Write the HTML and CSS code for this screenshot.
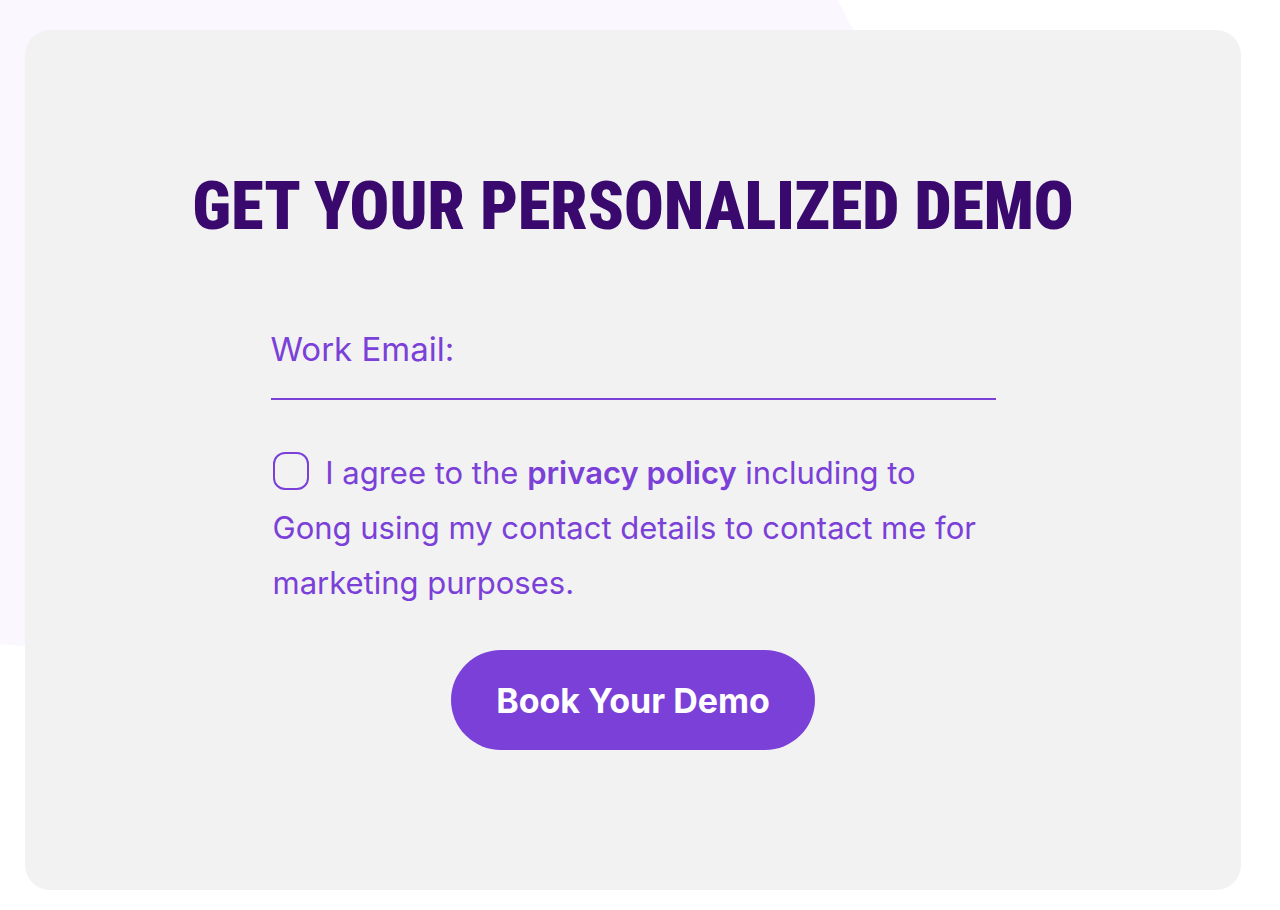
FILE: index.html
```html
<!DOCTYPE html>
<html lang="en">
<head>
<meta charset="utf-8">
<meta name="viewport" content="width=device-width, initial-scale=1">
<title>Get your personalized demo</title>
<link rel="stylesheet" href="styles.css">
</head>
<body class="page">
<div class="backdrop" aria-hidden="true"></div>
<main class="card">
  <h1 class="title">GET YOUR PERSONALIZED DEMO</h1>
  <form class="form">
    <input class="email" type="email" name="email" placeholder="Work Email:" aria-label="Work Email">
    <div class="consent">
      <input class="check" type="checkbox" id="agree" name="agree">
      <label for="agree">I agree to the <a class="link" href="#">privacy policy</a> including to Gong using my contact details to contact me for marketing purposes.</label>
    </div>
    <button class="submit" type="submit">Book Your Demo</button>
  </form>
</main>
</body>
</html>
```
FILE: styles.css
```css
* { box-sizing: border-box; }

.page {
  margin: 0;
  padding: 30px 39px 20px 25px;
  background: #fff;
  color: #7a40d8;
  font-family: Inter, "Liberation Sans", sans-serif;
}

.backdrop {
  position: absolute;
  z-index: -1;
  top: 0;
  left: 0;
  width: 67%;
  height: 648px;
  background: #faf7ff;
  clip-path: polygon(0 0, 838px 0, 100% 38px, 100% 100%, 36px 647px, 0 644px);
}

.card {
  padding: 137px 0 140px;
  border-radius: 25px;
  background: #f2f2f2;
}

.title {
  margin: 0 0 62px;
  color: #39096d;
  font-family: "Roboto Condensed", Roboto, sans-serif;
  font-size: 66px;
  font-weight: 900;
  line-height: 80px;
  text-align: center;
}

.form {
  display: flex;
  flex-direction: column;
  max-width: 725px;
  margin: 0 auto;
}

.email {
  width: 100%;
  height: 91px;
  padding: 0 0 10px;
  border: 0;
  border-bottom: 2px solid #7a40d8;
  border-radius: 0;
  background: transparent;
  color: inherit;
  font: 400 33px Inter, sans-serif;
  outline: 0;
}

.email::placeholder { color: inherit; opacity: 1; }

.consent {
  margin: 45px 0 40px;
  padding-left: 2px;
  font-size: 31px;
  font-weight: 400;
  line-height: 55px;
}

.check {
  width: 36px;
  height: 38px;
  margin: 0 8px 0 0;
  border: 2px solid #7a40d8;
  border-radius: 12px;
  appearance: none;
  vertical-align: -6px;
}

.check:checked { background: #7a40d8; }

.link { color: inherit; font-weight: 600; text-decoration: none; }

.submit {
  align-self: center;
  height: 100px;
  padding: 0 45px;
  border: 0;
  border-radius: 50px;
  background: #7a40d8;
  color: #fff;
  font: 650 34px Inter, sans-serif;
  cursor: pointer;
}
```
